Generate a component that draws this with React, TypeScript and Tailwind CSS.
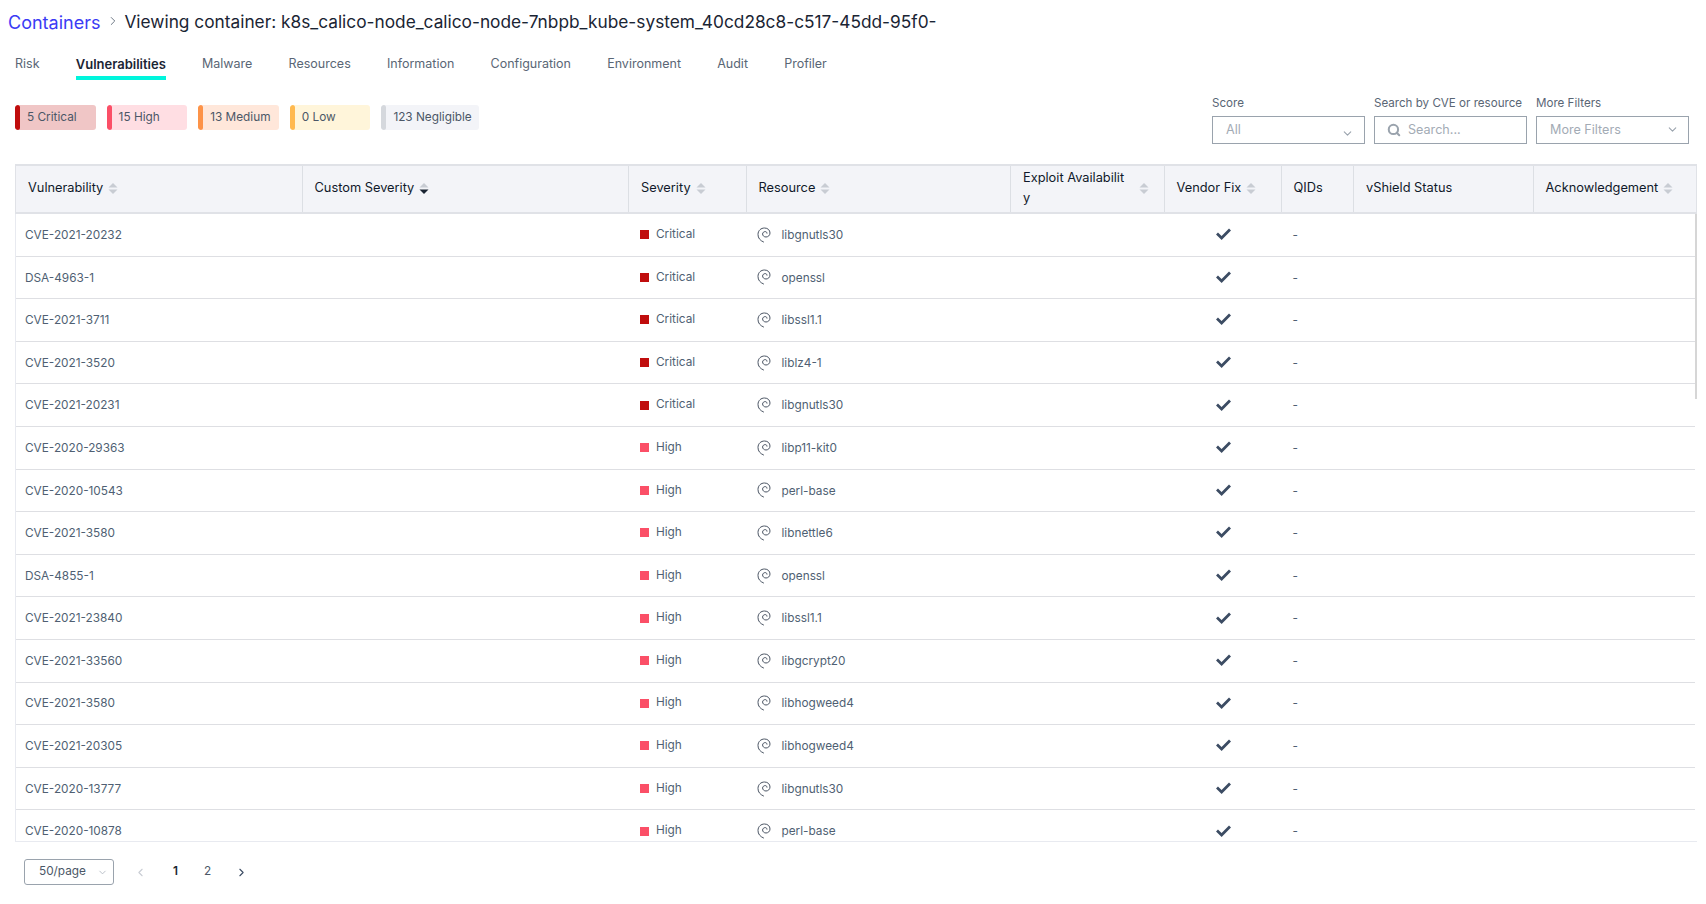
import React from 'react';
import { ChevronRight, ChevronLeft, ChevronDown, Search } from 'lucide-react';

const tabs = ['Risk', 'Vulnerabilities', 'Malware', 'Resources', 'Information', 'Configuration', 'Environment', 'Audit', 'Profiler'];

const badges = [
    { label: '5 Critical', bar: 'bg-[#c00d0d]', bg: 'bg-[#f0c6c6]', w: 'w-[80.6px]' },
    { label: '15 High', bar: 'bg-[#fb4f67]', bg: 'bg-[#ffdee3]', w: 'w-[80.6px]' },
    { label: '13 Medium', bar: 'bg-[#fd9348]', bg: 'bg-[#ffe7da]', w: 'w-[80.6px]' },
    { label: '0 Low', bar: 'bg-[#ffb94f]', bg: 'bg-[#fff5da]', w: 'w-[80.6px]' },
    { label: '123 Negligible', bar: 'bg-[#d5d8dd]', bg: 'bg-[#f3f4f8]', w: 'w-[98px]' },
];

const rows = [
    ['CVE-2021-20232', 'Critical', 'libgnutls30'],
    ['DSA-4963-1', 'Critical', 'openssl'],
    ['CVE-2021-3711', 'Critical', 'libssl1.1'],
    ['CVE-2021-3520', 'Critical', 'liblz4-1'],
    ['CVE-2021-20231', 'Critical', 'libgnutls30'],
    ['CVE-2020-29363', 'High', 'libp11-kit0'],
    ['CVE-2020-10543', 'High', 'perl-base'],
    ['CVE-2021-3580', 'High', 'libnettle6'],
    ['DSA-4855-1', 'High', 'openssl'],
    ['CVE-2021-23840', 'High', 'libssl1.1'],
    ['CVE-2021-33560', 'High', 'libgcrypt20'],
    ['CVE-2021-3580', 'High', 'libhogweed4'],
    ['CVE-2021-20305', 'High', 'libhogweed4'],
    ['CVE-2020-13777', 'High', 'libgnutls30'],
    ['CVE-2020-10878', 'High', 'perl-base'],
];

const gridCols = 'grid grid-cols-[286.5px_326.5px_117.5px_264.5px_153.5px_117px_72.5px_179.5px_1fr]';

const SortIcon = ({ active }: { active?: boolean }) => (
    <svg width="10" height="13" viewBox="0 0 10 13" className="shrink-0">
        <path d="M5 1 L9.5 5.4 L0.5 5.4 Z" fill="#c8ccd3" />
        <path d="M5 12 L9.5 7.6 L0.5 7.6 Z" fill={active ? '#1a2433' : '#c8ccd3'} />
    </svg>
);

const DebianIcon = () => (
    <svg width="14" height="16" viewBox="0 0 14 16" fill="none" stroke="#4a5463" strokeWidth="1" strokeLinecap="round" className="shrink-0">
        <path d="M6.5 15 C3 13.5 1 11 1 7.5 C1 3.5 4 1 7.5 1 C10.8 1 13 3.2 13 6 C13 8.4 11 10 9 10 C7 10 5.6 8.6 5.6 7 C5.6 5.6 6.8 4.6 8.2 4.6 C9.4 4.6 10 5.4 10 6.2" />
    </svg>
);

const CheckIcon = () => (
    <svg width="15" height="12" viewBox="0 0 15 12" fill="none" stroke="#3c4c63" strokeWidth="2.8">
        <path d="M1 5.6 L5.6 10 L14 1.5" />
    </svg>
);

const HeaderCell = ({ children, sort, active, last }: { children: React.ReactNode; sort?: boolean; active?: boolean; last?: boolean }) => (
    <div className={`flex items-center gap-[5px] pl-[12px] pr-[8px] pb-[2px] text-[12.8px] text-[#10192a] ${last ? '' : 'border-r border-[#dcdfe4]'}`}>
        <span>{children}</span>
        {sort && <SortIcon active={active} />}
    </div>
);

const Filter = ({ label, children }: { label: string; children: React.ReactNode }) => (
    <div className="flex flex-col w-[153px]">
        <label className="text-[11.6px] leading-[18px] text-[#5a6675] mb-[4px] whitespace-nowrap">{label}</label>
        <div className="h-[28px] border border-[#9aa3ad] flex items-center text-[12.6px] text-[#a3abb5]">
            {children}
        </div>
    </div>
);

export default function App() {
    return (
        <div className="w-[1706px] h-[904px] overflow-hidden bg-white font-['Inter',sans-serif] text-[#4f5f73]">
            {/* Breadcrumb */}
            <div className="flex items-center h-[24px] mt-[10px] pl-[8px] text-[18px] whitespace-nowrap">
                <span className="text-[#3b3bf5]">Containers</span>
                <ChevronRight size={14} strokeWidth={1.5} className="ml-[6px] mr-[4px] -mt-[3px] text-[#5a6675]" />
                <span className="text-[17.3px] text-[#1a2433]">Viewing container: k8s_calico-node_calico-node-7nbpb_kube-system_40cd28c8-c517-45dd-95f0-</span>
            </div>

            {/* Tabs */}
            <div className="flex gap-[36.2px] pl-[15px] mt-[17px] h-[29px] text-[12.5px]">
                {tabs.map(t => (
                    <div key={t} className={`h-[29px] pt-[3px] leading-[20px] ${t === 'Vulnerabilities' ? 'text-[13px] font-semibold text-[#1a2433] border-b-4 border-[#00f5dc]' : 'text-[#5a6675]'}`}>
                        {t}
                    </div>
                ))}
            </div>

            {/* Severity badges + filters */}
            <div className="flex justify-between items-start pl-[15px] pr-[17px] mt-[13px] h-[71px]">
                <div className="flex gap-[11px] mt-[12px]">
                    {badges.map(b => (
                        <div key={b.label} className={`flex items-center h-[25px] rounded-[3px] overflow-hidden text-[11.8px] text-[#4b5767] whitespace-nowrap ${b.bg} ${b.w}`}>
                            <div className={`w-[5px] h-full rounded-[3px] ${b.bar}`} />
                            <span className="pl-[7px]">{b.label}</span>
                        </div>
                    ))}
                </div>
                <div className="flex gap-[9px] mt-[1px]">
                    <Filter label="Score">
                        <span className="pl-[13px] flex-1">All</span>
                        <ChevronDown size={13} className="mr-[10px] mt-[6px] text-[#9aa3ad]" />
                    </Filter>
                    <Filter label="Search by CVE or resource">
                        <Search size={14} strokeWidth={3.5} className="ml-[12px] mr-[7px] text-[#9aa3ad]" />
                        <span>Search...</span>
                    </Filter>
                    <Filter label="More Filters">
                        <span className="pl-[13px] flex-1">More Filters</span>
                        <ChevronDown size={13} className="mr-[9px] mb-[2px] text-[#9aa3ad]" />
                    </Filter>
                </div>
            </div>

            {/* Table */}
            <div className="relative w-[1682px] ml-[15px] mr-[9px] h-[678px] overflow-hidden border-b border-[#e8eaf0]">
                <div className={`${gridCols} h-[50px] bg-[#f3f4f8] border-t-2 border-b-2 border-x border-[#e0e2e7]`}>
                    <HeaderCell sort>Vulnerability</HeaderCell>
                    <HeaderCell sort active>Custom Severity</HeaderCell>
                    <HeaderCell sort>Severity</HeaderCell>
                    <HeaderCell sort>Resource</HeaderCell>
                    <div className="flex items-center justify-between pl-[12px] pr-[15px] pb-[2px] text-[12.8px] leading-[20px] text-[#10192a] border-r border-[#dcdfe4]">
                        <span className="w-[103px] break-all">Exploit Availability</span>
                        <SortIcon />
                    </div>
                    <HeaderCell sort>Vendor Fix</HeaderCell>
                    <HeaderCell>QIDs</HeaderCell>
                    <HeaderCell>vShield Status</HeaderCell>
                    <HeaderCell sort last>Acknowledgement</HeaderCell>
                </div>
                <div className="border-l border-[#e8eaf0]">
                    {rows.map((r, i) => (
                        <div key={i} className={`${gridCols} h-[42.6px] items-center border-b border-[#dedfe3] text-[11.8px] mr-[2px]`}>
                            <div className="pl-[9px] pt-[2px]">{r[0]}</div>
                            <div />
                            <div className="flex items-center pl-[11px]">
                                <span className={`w-[9px] h-[9px] mr-[7px] ${r[1] === 'Critical' ? 'bg-[#c00d0d]' : 'bg-[#fb4f67]'}`} />
                                <span>{r[1]}</span>
                            </div>
                            <div className="flex items-center pl-[10px]">
                                <DebianIcon />
                                <span className="ml-[11px] pt-[2px]">{r[2]}</span>
                            </div>
                            <div />
                            <div className="flex justify-center -mt-[1px]"><CheckIcon /></div>
                            <div className="pl-[11px] pt-[2px]">-</div>
                            <div />
                            <div />
                        </div>
                    ))}
                </div>
                {/* scrollbar thumb */}
                <div className="absolute right-0 top-[50px] w-[2px] h-[185px] bg-[#d6d6d6]" />
            </div>

            {/* Pagination */}
            <div className="flex items-center h-[26px] mt-[17px] pl-[24px] text-[11.8px]">
                <div className="flex items-center w-[90px] h-[26px] border border-[#9aa3ad] rounded-[3px]">
                    <span className="pl-[14px] flex-1 text-[#4b5767]">50/page</span>
                    <ChevronDown size={11} className="mr-[5px] text-[#b5bbc4]" />
                </div>
                <ChevronLeft size={13} className="ml-[20px] text-[#c9cdd4]" />
                <span className="ml-[26px] font-semibold text-[#1a2433]">1</span>
                <span className="ml-[26px] text-[#4b5767]">2</span>
                <ChevronRight size={13} className="ml-[24px] text-[#3c4c63]" />
            </div>
        </div>
    );
}
